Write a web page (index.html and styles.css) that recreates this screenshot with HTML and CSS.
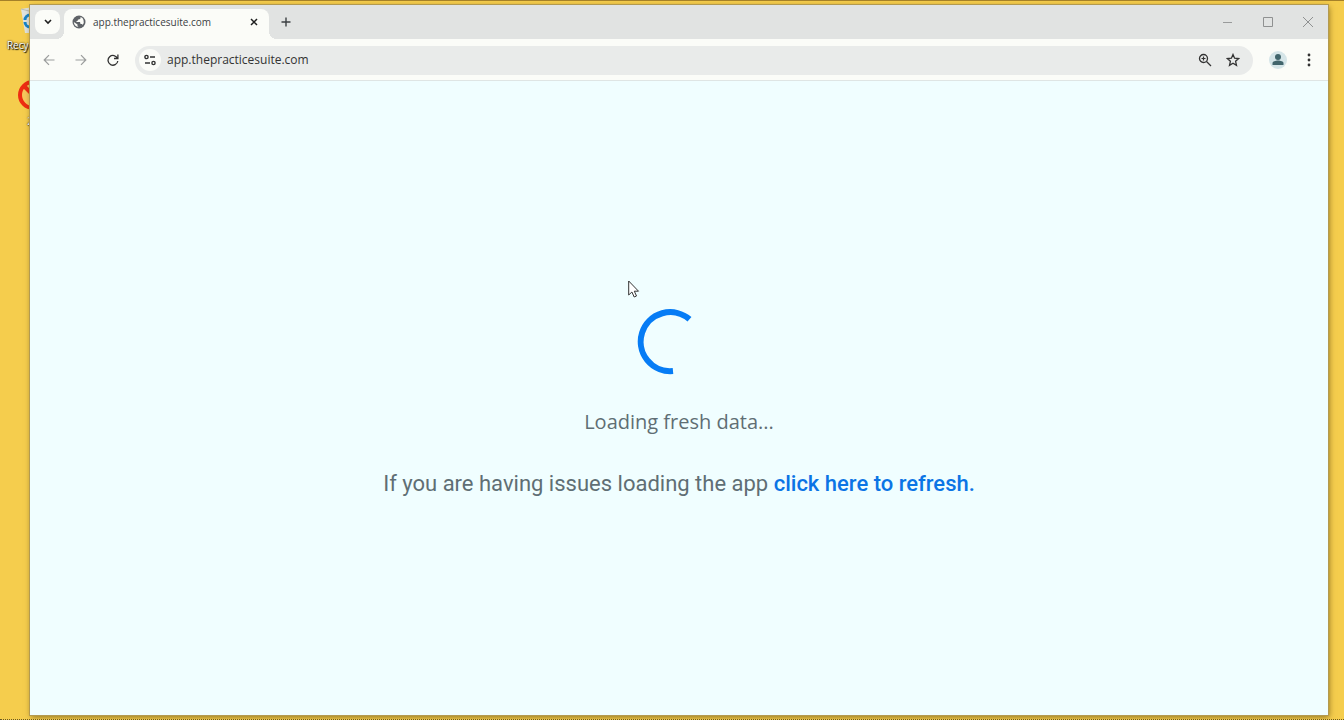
FILE: index.html
```html
<!DOCTYPE html>
<html lang="en">
<head>
    <meta charset="utf-8">
    <title>app.thepracticesuite.com</title>
    <link rel="stylesheet" href="styles.css">
</head>
<body>
    <div class="desktop-icons">
        <div class="desktop-icon">
            <svg width="30" height="28" viewBox="0 0 30 28">
                <path d="M3 3L15 1l12 2-4 24H7z" fill="#dfe3e0"/>
                <path d="M3 3l12 3 12-3" fill="none" stroke="#b9bdb8"/>
                <path d="M12 9a5 5 0 0 0-5 5m0 2a5 5 0 0 0 5 5M12 12l3 4" fill="none" stroke="#1684c9" stroke-width="3"/>
            </svg>
            <span>Recycle Bin</span>
        </div>
        <div class="desktop-icon">
            <svg width="32" height="30" viewBox="0 0 32 30">
                <circle cx="16" cy="15" r="13" fill="#f6c85c" stroke="#ee2d12" stroke-width="4"/>
                <path d="M7 6l18 18" stroke="#ee2d12" stroke-width="4"/>
            </svg>
            <span>22</span>
        </div>
    </div>

    <div class="window">
        <div class="tab-strip">
            <button class="tab-search" aria-label="Search tabs">
                <svg width="10" height="8" viewBox="0 0 10 8"><path d="M2 2l3 3 3-3" fill="none" stroke="#1f1f1f" stroke-width="1.600"/></svg>
            </button>
            <div class="tab">
                <svg width="14" height="14" viewBox="0 0 14 14">
                    <circle cx="7" cy="7" r="6.500" fill="#5f6368"/>
                    <path d="M8.500 2v1.500L7 4.500H6L5.500 6H4.500v1H8l.5 2h1.500l.5 1A5 5 0 0 0 11.500 5l-1-2zM1.800 7l3.700 2.500V11l1 1A5 5 0 0 1 1.800 7z" fill="#fbfcf8"/>
                </svg>
                <span class="tab-title">app.thepracticesuite.com</span>
                <button class="tab-close" aria-label="Close tab">
                    <svg width="10" height="10" viewBox="0 0 10 10"><path d="M2 2l6 6M8 2L2 8" stroke="#1f1f1f" stroke-width="1.500"/></svg>
                </button>
            </div>
            <button class="new-tab" aria-label="New tab">
                <svg width="10" height="10" viewBox="0 0 10 10"><path d="M5 .5v9M.5 5h9" stroke="#3c4043" stroke-width="1.400"/></svg>
            </button>
            <div class="window-controls">
                <button aria-label="Minimize"><svg width="10" height="10" viewBox="0 0 10 10"><path d="M0 5.500h9" stroke="#999b9b"/></svg></button>
                <button aria-label="Maximize"><svg width="10" height="10" viewBox="0 0 10 10"><path d="M.5.500h9v9h-9z" fill="none" stroke="#8f9191"/></svg></button>
                <button aria-label="Close"><svg width="10" height="10" viewBox="0 0 10 10"><path d="M0 0l10 10M10 0L0 10" stroke="#8f9191"/></svg></button>
            </div>
        </div>

        <div class="toolbar">
            <div class="nav-buttons">
                <button aria-label="Back"><svg width="12" height="12" viewBox="0 0 12 12"><path d="M11.500 6H1.500M6 1.200L1.200 6 6 10.800" fill="none" stroke="#9b9d9d" stroke-width="1.200"/></svg></button>
                <button aria-label="Forward"><svg width="12" height="12" viewBox="0 0 12 12"><path d="M.5 6h10M6 1.200L10.800 6 6 10.800" fill="none" stroke="#9b9d9d" stroke-width="1.200"/></svg></button>
                <button aria-label="Reload"><svg width="12" height="12" viewBox="0 0 12 12"><path d="M10.500 4.500A4.900 4.900 0 1 0 10.800 7M10.900.5v4H7" fill="none" stroke="#333" stroke-width="1.300"/></svg></button>
            </div>
            <div class="omnibox">
                <button class="site-info" aria-label="View site information">
                    <svg width="12" height="12" viewBox="0 0 12 12"><g fill="none" stroke="#333" stroke-width="1.400"><circle cx="2.500" cy="3" r="1.600"/><path d="M6 3h5M1 9h5"/><circle cx="9.500" cy="9" r="1.600"/></g></svg>
                </button>
                <input type="text" value="app.thepracticesuite.com" aria-label="Address and search bar">
                <button aria-label="Zoom"><svg width="14" height="14" viewBox="0 0 14 14"><g fill="none" stroke="#333" stroke-width="1.300"><circle cx="5.500" cy="5.500" r="4"/><path d="M8.500 8.500l4.500 4.500"/><path d="M5.500 3.500v4M3.500 5.500h4" stroke-width="1.200"/></g></svg></button>
                <button aria-label="Bookmark this tab"><svg width="14" height="14" viewBox="0 0 14 14"><path d="M7 1.500l1.600 3.700 4 .4-3 2.700.9 4L7 10.200l-3.500 2.100.9-4-3-2.700 4-.4z" fill="none" stroke="#333" stroke-width="1.300"/></svg></button>
            </div>
            <button class="profile" aria-label="Profile">
                <svg width="18" height="18" viewBox="0 0 18 18"><circle cx="9" cy="9" r="9" fill="#d5e5e8"/><circle cx="9" cy="6" r="3" fill="#41656c"/><path d="M3.500 14v-2c0-1.500 3-2.500 5.500-2.500s5.500 1 5.500 2.500v2z" fill="#41656c"/></svg>
            </button>
            <button class="menu" aria-label="Menu">
                <svg width="4" height="14" viewBox="0 0 4 14"><g fill="#333"><circle cx="2" cy="2" r="1.400"/><circle cx="2" cy="7" r="1.400"/><circle cx="2" cy="12" r="1.400"/></g></svg>
            </button>
        </div>

        <main class="page">
            <svg class="spinner" width="84" height="66" viewBox="0 0 84 66">
                <path d="M52.500 10.300A29.500 29.500 0 1 0 36 62" fill="none" stroke="#067cf5" stroke-width="6"/>
            </svg>
            <p class="loading">Loading fresh data...</p>
            <p class="help">If you are having issues loading the app <a href="#">click here to refresh.</a></p>
        </main>
    </div>

    <svg class="cursor" width="12" height="19" viewBox="0 0 12 19">
        <path d="M.7 1v14l3.200-3 2.300 5 2.300-1-2.200-4.800h4.200z" fill="#fff" stroke="#333"/>
    </svg>
</body>
</html>
```
FILE: styles.css
```css
* {
    box-sizing: border-box;
}
body {
    margin: 0;
    min-height: 100vh;
    padding: 4px 16px 4px 30px;
    display: flex;
    background-color: #f5cd4d;
    border-top: 1px solid #a58129;
    border-bottom: 1px dotted #6b5a22;
    font-family: "Open Sans", "Noto Sans", sans-serif;
}
button {
    display: flex;
    align-items: center;
    justify-content: center;
    padding: 0;
    border: none;
    background: none;
    flex: none;
}
svg {
    display: block;
    flex: none;
}

/* desktop */
.desktop-icons {
    position: absolute;
    left: 0;
    top: 6px;
    width: 66px;
    display: flex;
    flex-direction: column;
    gap: 28px;
}
.desktop-icon {
    display: flex;
    flex-direction: column;
    align-items: center;
    gap: 4px;
    color: #fff;
    font-size: 10px;
    line-height: 14px;
    white-space: nowrap;
    text-shadow: 0 0 2px #000, 1px 1px 1px #000;
}

/* browser window */
.window {
    position: relative;
    flex: 1;
    display: flex;
    flex-direction: column;
    background-color: #fbfcf8;
    box-shadow: 0 0 0 1px #b39a50, 1px 2px 6px rgba(70, 50, 0, 0.6);
}
.tab-strip {
    display: flex;
    align-items: center;
    height: 34px;
    padding-left: 5px;
    background-color: #e1e3e2;
}
.tab-search {
    width: 25px;
    height: 24px;
    border-radius: 8px;
    background-color: #fbfcf8;
}
.tab {
    position: relative;
    align-self: flex-end;
    display: flex;
    align-items: center;
    width: 205px;
    height: 30px;
    margin-left: 4px;
    padding: 0 10px 4px 8px;
    border-radius: 8px 8px 0 0;
    background-color: #fbfcf8;
}
.tab::before,
.tab::after {
    content: "";
    position: absolute;
    bottom: 0;
    width: 8px;
    height: 8px;
}
.tab::before {
    right: 100%;
    background: radial-gradient(circle at 0 0, transparent 8px, #fbfcf8 8px);
}
.tab::after {
    left: 100%;
    background: radial-gradient(circle at 100% 0, transparent 8px, #fbfcf8 8px);
}
.tab-title {
    flex: 1;
    margin-left: 7px;
    font-size: 10px;
    line-height: 14px;
    color: #3c4043;
}
.new-tab {
    width: 24px;
    height: 24px;
    margin-left: 5px;
}
.window-controls {
    display: flex;
    margin-left: auto;
}
.window-controls button {
    width: 40px;
    height: 34px;
}

/* toolbar */
.toolbar {
    display: flex;
    align-items: center;
    height: 42px;
    padding: 1px 7px 0 3px;
    border-bottom: 1px solid #dfe5e4;
}
.nav-buttons {
    display: flex;
}
.nav-buttons button {
    width: 32px;
    height: 32px;
}
.omnibox {
    flex: 1;
    display: flex;
    align-items: center;
    height: 29px;
    margin-left: 6px;
    padding: 0 6px 0 4px;
    border-radius: 15px;
    background-color: #e9ebea;
}
.omnibox button {
    width: 28px;
    height: 24px;
}
.omnibox .site-info {
    width: 22px;
    height: 22px;
    border-radius: 50%;
    background-color: #fbfcf8;
}
.omnibox input {
    flex: 1;
    min-width: 0;
    margin-left: 6px;
    padding: 0;
    border: none;
    outline: none;
    background: none;
    font-family: inherit;
    font-size: 12px;
    line-height: 18px;
    color: #333;
}
.profile {
    width: 24px;
    height: 24px;
    margin-left: 13px;
}
.menu {
    width: 24px;
    height: 24px;
    margin-left: 7px;
}

/* page */
.page {
    flex: 1;
    display: flex;
    flex-direction: column;
    align-items: center;
    justify-content: center;
    padding-top: 12px;
    background-color: #f0feff;
    color: #5f6e74;
    text-align: center;
}
.loading {
    margin: 32px 0;
    font-size: 20px;
    line-height: 30px;
}
.help {
    margin: 0;
    font-family: Roboto, sans-serif;
    font-size: 22px;
    line-height: 30px;
}
.help a {
    color: #0b74e5;
    font-weight: 500;
    text-decoration: none;
}
.cursor {
    position: absolute;
    left: 628px;
    top: 280px;
}
```
